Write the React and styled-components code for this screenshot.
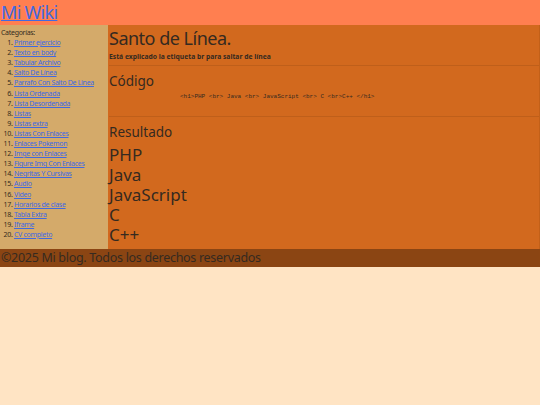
import React from 'react';
import styled, { createGlobalStyle } from 'styled-components';

const GlobalStyle = createGlobalStyle`
body {
  margin: 0;
  background: #FFE4C4;
  font-family: "Noto Sans", sans-serif;
  color: #352a20;
}
a {
  color: #4169E1;
}
`;

const Header = styled.header`
background: #FF7F50;
height: 25px;
padding-left: 1px;
`;

const Brand = styled.a`
font-size: 18px;
letter-spacing: -0.7px;
line-height: 25px;
`;

const Layout = styled.div`
display: flex;
`;

const Sidebar = styled.nav`
width: 108px;
flex-shrink: 0;
background: #D4AA6A;
font-size: 7px;
letter-spacing: -0.3px;
line-height: 10.1px;
padding: 3px 0 0 1px;
box-sizing: border-box;
`;

const CatList = styled.ol`
margin: 0;
padding-left: 13px;
`;

const Main = styled.main`
flex: 1;
background: #D2691E;
padding-left: 1px;
border-right: 1px solid #c26019;
`;

const Section = styled.section`
height: ${props => props.h}px;
border-bottom: ${props => (props.last ? "none" : "1px solid #bf5f1a")};
box-sizing: border-box;
`;

const Title = styled.h2`
margin: 0;
font-size: 18px;
letter-spacing: -0.5px;
font-weight: normal;
line-height: 26px;
`;

const Lead = styled.p`
margin: 0;
font-size: 6.75px;
font-weight: bold;
line-height: 12px;
`;

const SubTitle = styled.h3`
margin: 0;
padding-top: ${props => props.top}px;
font-size: ${props => props.size}px;
font-weight: normal;
line-height: ${props => props.lh}px;
`;

const Code = styled.pre`
margin: 0;
padding: 1px 0 0 71px;
font-family: "Liberation Mono", monospace;
font-size: 6px;
`;

const Result = styled.div`
font-size: 17px;
line-height: 20px;
padding-top: 3px;
`;

const Footer = styled.footer`
background: #8B4513;
height: 18px;
font-size: 12.5px;
letter-spacing: -0.3px;
line-height: 17px;
padding-left: 1px;
`;

const categories = [
  "Primer ejercicio",
  "Texto en body",
  "Tabular Archivo",
  "Salto De Línea",
  "Parrafo Con Salto De Linea",
  "Lista Ordenada",
  "Lista Desordenada",
  "Listas",
  "Listas extra",
  "Listas Con Enlaces",
  "Enlaces Pokemon",
  "Imge con Enlaces",
  "Figure Img Con Enlaces",
  "Negritas Y Cursivas",
  "Audio",
  "Video",
  "Horarios de clase",
  "Tabla Extra",
  "Iframe",
  "CV completo",
];

export default function App() {
  return (
    <>
      <GlobalStyle />
      <Header>
        <Brand href="#">Mi Wiki</Brand>
      </Header>
      <Layout>
        <Sidebar>
          Categorías:
          <CatList>
            {categories.map((c, i) => (
              <li key={i}><a href="#">{c}</a></li>
            ))}
          </CatList>
        </Sidebar>
        <Main>
          <Section h={41}>
            <Title>Santo de Línea.</Title>
            <Lead>Está explicado la etiqueta br para saltar de línea</Lead>
          </Section>
          <Section h={51}>
            <SubTitle top={4} size={13.5} lh={22}>Código</SubTitle>
            <Code>{"<h1>PHP <br> Java <br> JavaScript <br> C <br>C++ </h1>"}</Code>
          </Section>
          <Section h={132} last>
            <SubTitle top={5} size={13.5} lh={20}>Resultado</SubTitle>
            <Result>PHP<br />Java<br />JavaScript<br />C<br />C++</Result>
          </Section>
        </Main>
      </Layout>
      <Footer>©2025 Mi blog. Todos los derechos reservados</Footer>
    </>
  );
}
